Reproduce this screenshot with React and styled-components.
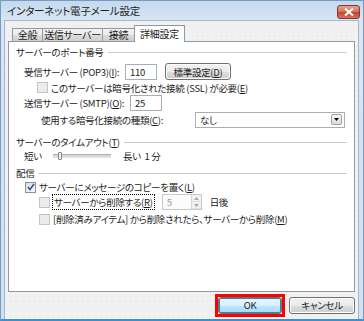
import React from 'react'
import styled, { createGlobalStyle } from 'styled-components'

const GlobalStyle = createGlobalStyle`
    html, body {
        margin: 0;
        padding: 0;
        background: #ffffff;
    }
    body {
        font-family: 'Noto Sans CJK JP', 'Noto Sans', sans-serif;
        font-size: 9.5px;
        letter-spacing: -0.3px;
        font-feature-settings: 'palt';
        color: #1c1c1c;
    }
`

const Window = styled.div`
    width: 364px;
    height: 321px;
    box-sizing: border-box;
    background: linear-gradient(180deg, #c4d9ee 0px, #d8e6f4 20px, #cfe0f1 100%);
    border: 1px solid #7a9bc0;
    border-bottom: 2px solid #3c8fd2;
    display: flex;
    flex-direction: column;
`

const TitleBar = styled.div`
    height: 18px;
    display: flex;
    align-items: center;
    justify-content: space-between;
    padding: 0 3px 0 6px;
`

const Title = styled.span`
    font-size: 10.5px;
    letter-spacing: -0.2px;
    color: #1e1e1e;
`

const CloseButton = styled.div`
    width: 23px;
    height: 14px;
    margin-top: 3px;
    box-sizing: border-box;
    border: 1px solid #7b3a33;
    border-radius: 3px;
    background: linear-gradient(180deg, #e7a18f 0%, #d4705c 50%, #c2422c 51%, #d4735d 100%);
    display: flex;
    align-items: center;
    justify-content: center;
`

const Body = styled.div`
    flex: 1;
    margin: 1px 4px 0 3px;
    background-color: #f0f0f0;
    background-image: radial-gradient(#fafafa 0.6px, transparent 0.8px);
    background-size: 6px 5px;
    border: 1px solid #a5b7cc;
    border-bottom: none;
    padding: 4px 3px 0 3px;
    display: flex;
    flex-direction: column;
`

const TabRow = styled.div`
    display: flex;
    align-items: flex-end;
    height: 16px;
    padding-left: 4px;
    position: relative;
    z-index: 1;
`

const Tab = styled.div`
    width: ${(props) => props.w}px;
    height: ${(props) => (props.active ? '17px' : '14px')};
    box-sizing: border-box;
    margin-right: -1px;
    margin-bottom: -1px;
    border: 1px solid #8e9aa5;
    border-bottom: ${(props) => (props.active ? 'none' : '1px solid #8e9aa5')};
    background: ${(props) =>
        props.active
            ? '#ffffff'
            : 'linear-gradient(180deg, #f2f2f2 0%, #ebebeb 50%, #dcdcdc 51%, #cfcfcf 100%)'};
    display: flex;
    align-items: center;
    justify-content: center;
    font-size: 10px;
    line-height: 1;
    z-index: ${(props) => (props.active ? 2 : 1)};
`

const Panel = styled.div`
    height: 251px;
    box-sizing: border-box;
    background: #ffffff;
    border: 1px solid #8e9aa5;
    padding: 3px 6px 0 7px;
    display: flex;
    flex-direction: column;
`

const GroupHeader = styled.div`
    display: flex;
    align-items: center;
    height: 14px;
    margin-top: ${(props) => props.top || 0}px;
    &::after {
        content: '';
        flex: 1;
        margin-left: 4px;
        margin-right: 1px;
        border-top: 1px solid #c6cbd1;
    }
`

const Row = styled.div`
    display: flex;
    align-items: center;
    height: ${(props) => props.h || 16}px;
    padding-left: ${(props) => props.indent || 0}px;
    margin-top: ${(props) => props.top || 0}px;
    white-space: nowrap;
`

const Label = styled.span`
    width: ${(props) => (props.w ? props.w + 'px' : 'auto')};
    flex: none;
`

const TextBox = styled.div`
    width: ${(props) => props.w}px;
    height: 16px;
    box-sizing: border-box;
    border: 1px solid #abadb3;
    background: #fff;
    display: flex;
    align-items: center;
    padding-left: 4px;
    margin-left: ${(props) => props.ml || 0}px;
`

const Button = styled.div`
    width: ${(props) => props.w}px;
    height: 17px;
    box-sizing: border-box;
    border: 1px solid #707070;
    border-radius: 3px;
    background: ${(props) =>
        props.primary
            ? 'linear-gradient(180deg, #eaf6fd 0%, #d9f0fc 50%, #bee6fd 51%, #a7d9f5 100%)'
            : 'linear-gradient(180deg, #f2f2f2 0%, #ebebeb 50%, #dddddd 51%, #cfcfcf 100%)'};
    box-shadow: ${(props) => (props.primary ? 'inset 0 0 0 1px #3c7fb1' : 'inset 0 0 0 1px #fcfcfc')};
    display: flex;
    align-items: center;
    justify-content: center;
    margin-left: ${(props) => props.ml || 0}px;
`

const CheckBox = styled.div`
    width: 11px;
    height: 11px;
    box-sizing: border-box;
    border: 1px solid ${(props) => (props.disabled ? '#c4c4c4' : '#8f8f8f')};
    background: ${(props) =>
        props.disabled ? '#ececec' : 'linear-gradient(135deg, #dcdcdc 0%, #fafafa 100%)'};
    margin-right: 3px;
    flex: none;
    display: flex;
    align-items: center;
    justify-content: center;
`

const FocusText = styled.span`
    outline: 1px dotted #000;
    outline-offset: 0;
    padding: 0 1px;
`

const Select = styled.div`
    width: 150px;
    height: 16px;
    box-sizing: border-box;
    border: 1px solid #abadb3;
    display: flex;
    align-items: center;
    justify-content: space-between;
    padding-left: 4px;
    padding-right: 2px;
`

const DropArrow = styled.div`
    width: 11px;
    height: 11px;
    box-sizing: border-box;
    border: 1px solid #a0a0a0;
    border-radius: 2px;
    background: linear-gradient(180deg, #f5f5f5 0%, #dcdcdc 100%);
    display: flex;
    align-items: center;
    justify-content: center;
`

const Slider = styled.div`
    width: 58px;
    height: 10px;
    margin: 0 12px 0 11px;
    position: relative;
    display: flex;
    align-items: center;
    &::before {
        content: '';
        flex: 1;
        height: 2px;
        border-top: 1px solid #b0b0b0;
        border-bottom: 1px solid #e6e6e6;
        background: #d8d8d8;
    }
`

const Thumb = styled.div`
    position: absolute;
    left: 5px;
    top: 1px;
    width: 4px;
    height: 8px;
    box-sizing: border-box;
    border: 1px solid #8a8a8a;
    border-radius: 1px;
    background: #eeeeee;
`

const Spinner = styled.div`
    width: 40px;
    height: 16px;
    box-sizing: border-box;
    border: 1px solid #c9c9c9;
    background: #fbfbfb;
    color: #9a9a9a;
    display: flex;
    align-items: center;
    justify-content: space-between;
    padding-left: 4px;
    margin-left: 8px;
    margin-right: 8px;
`

const SpinButtons = styled.div`
    width: 9px;
    height: 14px;
    display: flex;
    flex-direction: column;
    border-left: 1px solid #d6d6d6;
    & > div {
        flex: 1;
        display: flex;
        align-items: center;
        justify-content: center;
        background: #f2f2f2;
        border-bottom: 1px solid #e0e0e0;
    }
`

const ButtonRow = styled.div`
    flex: 1;
    display: flex;
    align-items: center;
    justify-content: flex-end;
    padding-bottom: 1px;
`

const Highlight = styled.div`
    border: 3px solid #ff0000;
    box-sizing: border-box;
    margin-right: 3px;
    display: flex;
`

const U = styled.span`
    text-decoration: underline;
`

const Arrow = ({ up }) => (
    <svg width="5" height="3" viewBox="0 0 5 3">
        <path d={up ? 'M2.5 0 L5 3 L0 3 Z' : 'M0 0 L5 0 L2.5 3 Z'} fill="#a8a8a8" />
    </svg>
)

export default function App() {
    return (
        <>
            <GlobalStyle />
            <Window>
                <TitleBar>
                    <Title>インターネット電子メール設定</Title>
                    <CloseButton>
                        <svg width="10" height="8" viewBox="0 0 10 8">
                            <path d="M1 0.5 L9 7.5 M9 0.5 L1 7.5" stroke="#ffffff" strokeWidth="2" />
                        </svg>
                    </CloseButton>
                </TitleBar>
                <Body>
                    <TabRow>
                        <Tab w={31}>全般</Tab>
                        <Tab w={61}>送信サーバー</Tab>
                        <Tab w={33}>接続</Tab>
                        <Tab w={51} active>
                            詳細設定
                        </Tab>
                    </TabRow>
                    <Panel>
                        <GroupHeader>サーバーのポート番号</GroupHeader>
                        <Row indent={8} top={4} h={17}>
                            <Label w={101}>
                                受信サーバー (POP3)(<U>I</U>):
                            </Label>
                            <TextBox w={32}>110</TextBox>
                            <Button w={66} ml={8}>
                                標準設定(<U>D</U>)
                            </Button>
                        </Row>
                        <Row indent={21} h={15}>
                            <CheckBox disabled />
                            このサーバーは暗号化された接続 (SSL) が必要(<U>E</U>)
                        </Row>
                        <Row indent={8} h={16}>
                            <Label w={106}>
                                送信サーバー (SMTP)(<U>O</U>):
                            </Label>
                            <TextBox w={32}>25</TextBox>
                        </Row>
                        <Row indent={25} h={17}>
                            <Label w={154}>
                                使用する暗号化接続の種類(<U>C</U>):
                            </Label>
                            <Select>
                                なし
                                <DropArrow>
                                    <svg width="5" height="3" viewBox="0 0 5 3">
                                        <path d="M0 0 L5 0 L2.5 3 Z" fill="#000" />
                                    </svg>
                                </DropArrow>
                            </Select>
                        </Row>
                        <GroupHeader top={7}>
                            サーバーのタイムアウト(<U>T</U>)
                        </GroupHeader>
                        <Row indent={8} h={13}>
                            短い
                            <Slider>
                                <Thumb />
                            </Slider>
                            長い&nbsp;&nbsp;1&nbsp;分
                        </Row>
                        <GroupHeader top={4}>配信</GroupHeader>
                        <Row indent={9} h={14}>
                            <CheckBox>
                                <svg width="8" height="8" viewBox="0 0 8 8">
                                    <path d="M1 4 L3 6.5 L7 1" stroke="#2a4fa8" strokeWidth="1.6" fill="none" />
                                </svg>
                            </CheckBox>
                            サーバーにメッセージのコピーを置く(<U>L</U>)
                        </Row>
                        <Row indent={23} h={16}>
                            <CheckBox disabled />
                            <FocusText>
                                サーバーから削除する(<U>R</U>)
                            </FocusText>
                            <Spinner>
                                5
                                <SpinButtons>
                                    <div>
                                        <Arrow up />
                                    </div>
                                    <div>
                                        <Arrow />
                                    </div>
                                </SpinButtons>
                            </Spinner>
                            日後
                        </Row>
                        <Row indent={23} h={18}>
                            <CheckBox disabled />
                            [削除済みアイテム] から削除されたら、サーバーから削除(<U>M</U>)
                        </Row>
                    </Panel>
                    <ButtonRow>
                        <Highlight>
                            <Button w={64} primary>
                                OK
                            </Button>
                        </Highlight>
                        <Button w={66} ml={1}>
                            キャンセル
                        </Button>
                    </ButtonRow>
                </Body>
            </Window>
        </>
    )
}
